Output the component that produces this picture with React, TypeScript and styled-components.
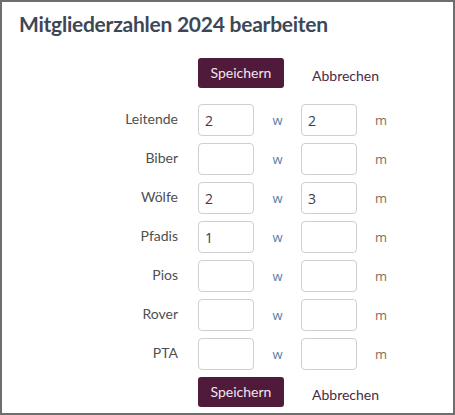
import React from "react";
import styled, { createGlobalStyle } from "styled-components";

const Global = createGlobalStyle`
  html, body { margin: 0; padding: 0; background: #fff; }
  body { font-family: "Lato", "Open Sans", sans-serif; }
`;

const Frame = styled.div`
  box-sizing: border-box;
  width: 455px;
  height: 415px;
  border: 2px solid #6e6e6e;
  overflow: hidden;
  background: #fff;
`;

const Title = styled.h1`
  margin: 0;
  padding: 9px 0 0 17px;
  font-family: "Lato", sans-serif;
  font-weight: 700;
  font-size: 21px;
  line-height: 26px;
  color: #3d4756;
  letter-spacing: -0.25px;
`;

const Form = styled.div`
  display: grid;
  grid-template-columns: 196px 56px 47px 56px 40px;
  row-gap: 7px;
  align-items: center;
  margin-top: 21px;
`;

const ButtonRow = styled.div<{ $bottom: number }>`
  grid-column: 2 / span 4;
  display: flex;
  align-items: center;
  margin-bottom: ${(p) => p.$bottom}px;
`;

const SaveButton = styled.button`
  box-sizing: border-box;
  width: 86px;
  height: 30px;
  border: none;
  border-radius: 3px;
  background: #501a3b;
  color: #f1e6ee;
  font-family: "Lato", sans-serif;
  font-size: 14px;
  padding: 0 0 2px;
`;

const CancelButton = styled.button`
  border: none;
  background: none;
  color: #4a2a43;
  font-family: "Lato", sans-serif;
  font-size: 14px;
  padding: 0;
  margin-left: 28px;
  margin-top: 5px;
`;

const Label = styled.div`
  text-align: right;
  padding-right: 20px;
  padding-bottom: 3px;
  font-family: "Lato", sans-serif;
  font-size: 14px;
  color: #4f4f4f;
`;

const NumInput = styled.input`
  box-sizing: border-box;
  width: 56px;
  height: 32px;
  border: 1px solid #cfcfcf;
  border-radius: 4px;
  padding: 0 0 0 6px;
  font-family: "Open Sans", sans-serif;
  font-size: 14px;
  color: #3c3c48;
  outline: none;
`;

const Unit = styled.div<{ $kind: "w" | "m" }>`
  font-family: "Open Sans", sans-serif;
  font-size: 13px;
  padding-top: 0;
  color: ${(p) => (p.$kind === "w" ? "#5a7fa8" : "#8c6a58")};
  text-align: ${(p) => (p.$kind === "w" ? "center" : "left")};
  padding-left: ${(p) => (p.$kind === "m" ? "18px" : "0")};
`;

const rows: [string, string, string][] = [
  ["Leitende", "2", "2"],
  ["Biber", "", ""],
  ["Wölfe", "2", "3"],
  ["Pfadis", "1", ""],
  ["Pios", "", ""],
  ["Rover", "", ""],
  ["PTA", "", ""],
];

export default function App() {
  return (
    <>
      <Global />
      <Frame>
        <Title>Mitgliederzahlen 2024 bearbeiten</Title>
        <Form>
          <ButtonRow $bottom={9}>
            <SaveButton>Speichern</SaveButton>
            <CancelButton>Abbrechen</CancelButton>
          </ButtonRow>
          {rows.map(([name, w, m]) => (
            <React.Fragment key={name}>
              <Label>{name}</Label>
              <NumInput defaultValue={w} />
              <Unit $kind="w">w</Unit>
              <NumInput defaultValue={m} />
              <Unit $kind="m">m</Unit>
            </React.Fragment>
          ))}
          <ButtonRow $bottom={0}>
            <SaveButton>Speichern</SaveButton>
            <CancelButton>Abbrechen</CancelButton>
          </ButtonRow>
        </Form>
      </Frame>
    </>
  );
}
